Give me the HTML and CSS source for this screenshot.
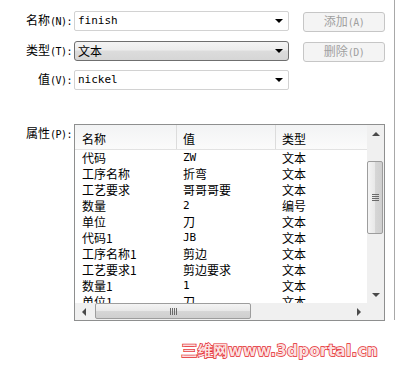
FILE: index.html
```html
<!DOCTYPE html>
<html lang="zh">
<head>
<meta charset="UTF-8">
<meta name="viewport" content="width=device-width, initial-scale=1.0">
<title>属性</title>
<link rel="stylesheet" href="styles.css">
</head>
<body>

<div class="dialog">
  <div class="field-row row-name">
    <label class="field-label">名称<span class="key">(N):</span></label>
    <div class="combo"><span class="combo-value lat">finish</span><span class="arrow"></span></div>
    <button class="btn" disabled>添加<span class="key">(A)</span></button>
  </div>

  <div class="field-row row-type">
    <label class="field-label">类型<span class="key">(T):</span></label>
    <div class="combo combo-active"><span class="combo-value">文本</span><span class="arrow"></span></div>
    <button class="btn" disabled>删除<span class="key">(D)</span></button>
  </div>

  <div class="field-row row-value">
    <label class="field-label">值<span class="key">(V):</span></label>
    <div class="combo"><span class="combo-value lat">nickel</span><span class="arrow"></span></div>
  </div>

  <div class="prop-row">
    <label class="field-label prop-label">属性<span class="key">(P):</span></label>
    <div class="listview">
      <div class="lv-content">
        <div class="lv-head">
          <div class="col c1">名称</div>
          <div class="col c2">值</div>
          <div class="col c3">类型</div>
        </div>
        <div class="lv-rows">
          <div class="lv-row"><div class="col c1">代码</div><div class="col c2 lat">ZW</div><div class="col c3">文本</div></div>
          <div class="lv-row"><div class="col c1">工序名称</div><div class="col c2">折弯</div><div class="col c3">文本</div></div>
          <div class="lv-row"><div class="col c1">工艺要求</div><div class="col c2">哥哥哥要</div><div class="col c3">文本</div></div>
          <div class="lv-row"><div class="col c1">数量</div><div class="col c2 lat">2</div><div class="col c3">编号</div></div>
          <div class="lv-row"><div class="col c1">单位</div><div class="col c2">刀</div><div class="col c3">文本</div></div>
          <div class="lv-row"><div class="col c1">代码1</div><div class="col c2 lat">JB</div><div class="col c3">文本</div></div>
          <div class="lv-row"><div class="col c1">工序名称1</div><div class="col c2">剪边</div><div class="col c3">文本</div></div>
          <div class="lv-row"><div class="col c1">工艺要求1</div><div class="col c2">剪边要求</div><div class="col c3">文本</div></div>
          <div class="lv-row"><div class="col c1">数量1</div><div class="col c2 lat">1</div><div class="col c3">文本</div></div>
          <div class="lv-row"><div class="col c1">单位1</div><div class="col c2">刀</div><div class="col c3">文本</div></div>
        </div>
      </div>

      <div class="vscroll">
        <div class="sb-btn"><span class="tri tri-up"></span></div>
        <div class="sb-track">
          <div class="thumb thumb-v"><span class="grip"></span></div>
        </div>
        <div class="sb-btn"><span class="tri tri-down"></span></div>
      </div>

      <div class="hscroll">
        <div class="sb-btn"><span class="tri tri-left"></span></div>
        <div class="sb-track">
          <div class="thumb thumb-h"><span class="grip"></span></div>
        </div>
        <div class="sb-btn"><span class="tri tri-right"></span></div>
      </div>
      <div class="corner"></div>
    </div>
  </div>
</div>

<div class="watermark">三维网www.3dportal.cn</div>

</body>
</html>
```

FILE: styles.css
```css
body {
  margin: 0;
  background: #fff;
  color: #000;
  font-family: "Noto Sans CJK SC", "DejaVu Sans", sans-serif;
  font-size: 12px;
  width: 397px;
  height: 366px;
  overflow: hidden;
}

.dialog {
  width: 395px;
  height: 320px;
  box-sizing: border-box;
  border-right: 1px solid #a8a8a8;
  padding-top: 11px;
}

.field-row {
  display: flex;
  align-items: center;
  height: 20px;
}
.row-type { margin-top: 10px; }
.row-value { margin-top: 9px; }

.field-label {
  width: 72px;
  margin-right: 2px;
  text-align: right;
  white-space: nowrap;
  line-height: 14px;
}
.key {
  font-family: "DejaVu Sans Mono", monospace;
  font-size: 10px;
  letter-spacing: -0.5px;
}
.lat {
  font-family: "DejaVu Sans Mono", monospace;
  font-size: 11px;
}

.combo {
  width: 215px;
  height: 20px;
  box-sizing: border-box;
  border: 1px solid #d2d2d2;
  border-radius: 2px;
  background: #fff;
  display: flex;
  align-items: center;
  justify-content: space-between;
  padding: 0 5px 0 3px;
}
.combo-active {
  border-color: #6f6f6f;
  border-radius: 3px;
  background: linear-gradient(#f4f4f4, #ececec 45%, #dcdcdc 50%, #d6d6d6);
}
.combo-value {
  line-height: 16px;
}
.arrow {
  width: 0;
  height: 0;
  border-left: 4px solid transparent;
  border-right: 4px solid transparent;
  border-top: 4px solid #000;
}

.btn {
  width: 82px;
  height: 20px;
  margin-left: 14px;
  margin-top: 2px;
  box-sizing: border-box;
  border: 1px solid #c6c6c6;
  border-radius: 3px;
  background: #f4f4f4;
  color: #a0a0a0;
  font-family: inherit;
  font-size: 12px;
  line-height: 16px;
  padding: 0;
}

.prop-row {
  display: flex;
  align-items: flex-start;
  margin-top: 34px;
}
.prop-label {
  margin-top: 2px;
}

.listview {
  width: 311px;
  height: 197px;
  box-sizing: border-box;
  border: 1px solid #8e8f8f;
  display: grid;
  grid-template-columns: 292px 17px;
  grid-template-rows: 178px 17px;
  background: #fff;
}

.lv-content {
  overflow: hidden;
}
.lv-head {
  display: flex;
  height: 24px;
  border-bottom: 1px solid #e2e2e2;
  background: linear-gradient(#f2f3f4, #fbfbfb);
  line-height: 27px;
}
.lv-head .col {
  border-right: 1px solid #dcdcdc;
}
.lv-head .c3 {
  border-right: none;
}
.col {
  box-sizing: border-box;
  white-space: nowrap;
  overflow: hidden;
}
.c1 { width: 102px; padding-left: 7px; }
.c2 { width: 99px; padding-left: 6px; }
.c3 { width: 91px; padding-left: 6px; }

.lv-row {
  display: flex;
  height: 16px;
  line-height: 16px;
}

.vscroll,
.hscroll,
.corner {
  background: #f0f0f0;
}
.vscroll {
  display: flex;
  flex-direction: column;
}
.hscroll {
  display: flex;
}
.sb-btn {
  width: 17px;
  height: 17px;
  flex: none;
  display: flex;
  align-items: center;
  justify-content: center;
}
.sb-track {
  flex: 1;
  position: relative;
}
.vscroll .sb-track {
  padding-top: 19px;
}
.hscroll .sb-track {
  padding-left: 3px;
  display: flex;
}

.thumb {
  box-sizing: border-box;
  border: 1px solid #9d9d9d;
  border-radius: 2px;
  display: flex;
  align-items: center;
  justify-content: center;
}
.thumb-v {
  width: 16px;
  height: 73px;
  background: linear-gradient(90deg, #f4f4f4, #e8e8e8 50%, #d6d6d6 52%, #cfcfcf);
}
.thumb-h {
  width: 156px;
  height: 16px;
  background: linear-gradient(#f4f4f4, #e8e8e8 50%, #d6d6d6 52%, #cfcfcf);
}
.thumb-v .grip {
  width: 7px;
  height: 7px;
  background: repeating-linear-gradient(#6a6a6a 0 1px, transparent 1px 2px);
}
.thumb-h .grip {
  width: 7px;
  height: 7px;
  background: repeating-linear-gradient(90deg, #6a6a6a 0 1px, transparent 1px 2px);
}

.tri {
  width: 0;
  height: 0;
}
.tri-up {
  border-left: 4px solid transparent;
  border-right: 4px solid transparent;
  border-bottom: 4px solid #4a4a4a;
}
.tri-down {
  border-left: 4px solid transparent;
  border-right: 4px solid transparent;
  border-top: 4px solid #4a4a4a;
}
.tri-left {
  border-top: 4px solid transparent;
  border-bottom: 4px solid transparent;
  border-right: 4px solid #4a4a4a;
}
.tri-right {
  border-top: 4px solid transparent;
  border-bottom: 4px solid transparent;
  border-left: 4px solid #4a4a4a;
}

.watermark {
  margin-top: 20px;
  text-align: right;
  padding-right: 19px;
  font-family: "DejaVu Sans", sans-serif;
  font-weight: bold;
  font-size: 15px;
  line-height: 22px;
  color: #fbe0e0;
  -webkit-text-stroke: 1.4px #e3262a;
  paint-order: stroke fill;
  letter-spacing: 0.4px;
}
```
